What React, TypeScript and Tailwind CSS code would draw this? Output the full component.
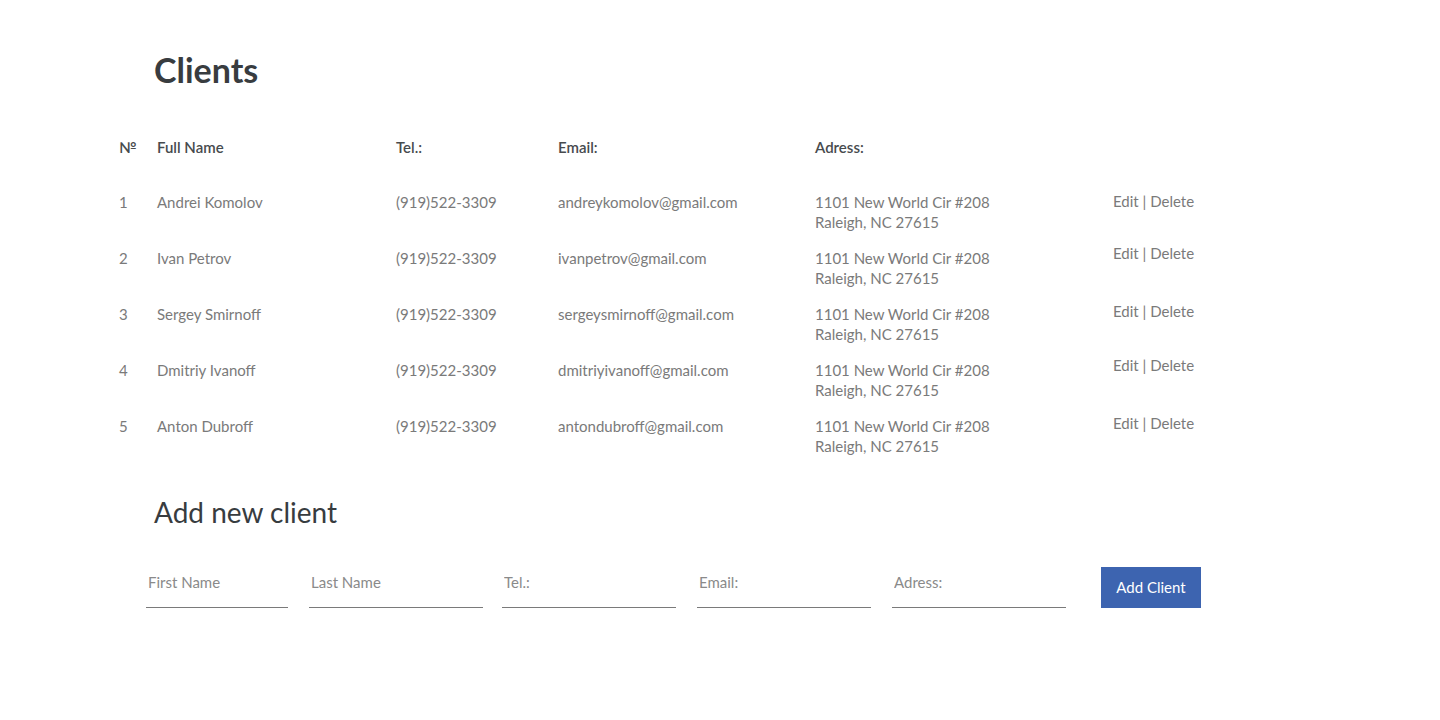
import React from 'react'

const clients = [
  { id: 1, name: 'Andrei Komolov', tel: '(919)522-3309', email: 'andreykomolov@gmail.com', shift: 'mt-[-1px]' },
  { id: 2, name: 'Ivan Petrov', tel: '(919)522-3309', email: 'ivanpetrov@gmail.com', shift: 'mt-[-5px]' },
  { id: 3, name: 'Sergey Smirnoff', tel: '(919)522-3309', email: 'sergeysmirnoff@gmail.com', shift: 'mt-[-3px]' },
  { id: 4, name: 'Dmitriy Ivanoff', tel: '(919)522-3309', email: 'dmitriyivanoff@gmail.com', shift: 'mt-[-5px]' },
  { id: 5, name: 'Anton Dubroff', tel: '(919)522-3309', email: 'antondubroff@gmail.com', shift: 'mt-[-3px]' },
]

const fields = [
  { label: 'First Name', cls: 'w-[142px]' },
  { label: 'Last Name', cls: 'w-[174px] ml-[21px]' },
  { label: 'Tel.:', cls: 'w-[174px] ml-[19px]' },
  { label: 'Email:', cls: 'w-[174px] ml-[21px]' },
  { label: 'Adress:', cls: 'w-[174px] ml-[21px]' },
]

const cols = 'grid grid-cols-[38px_239px_162px_257px_298px_130px]'

export default function App() {
  return (
    <main className="min-h-screen bg-white font-['Lato','Noto_Sans',sans-serif] text-[#7a7a7a]">
      <div className="pl-[154px] pt-[50px]">
        <h1 className="text-[34px] font-bold leading-[40px] text-[#383c3f]">Clients</h1>
      </div>

      {/* таблица клиентов */}
      <div className="pl-[119px] pt-[47px]">
        <div className={`${cols} text-[15px] font-semibold leading-[20px] text-[#474b4e]`}>
          <div>№</div>
          <div>Full Name</div>
          <div>Tel.:</div>
          <div>Email:</div>
          <div>Adress:</div>
          <div></div>
        </div>

        <div className="pt-[35px]">
          {clients.map(c => (
            <div key={c.id} className={`${cols} h-[56px] text-[15px] leading-[20px]`}>
              <div>{c.id}</div>
              <div>{c.name}</div>
              <div>{c.tel}</div>
              <div>{c.email}</div>
              <div>
                <div>1101 New World Cir #208</div>
                <div>Raleigh, NC 27615</div>
              </div>
              <div className={c.shift}>
                <span className="cursor-pointer">Edit</span> | <span className="cursor-pointer">Delete</span>
              </div>
            </div>
          ))}
        </div>
      </div>

      {/* добавление клиента */}
      <div className="pl-[154px] pt-[24px]">
        <h2 className="text-[28px] leading-[32px] text-[#383c3f]">Add new client</h2>
      </div>

      <div className="flex items-end pl-[146px] pt-[39px]">
        <div className="flex">
          {fields.map(f => (
            <input
              key={f.label}
              placeholder={f.label}
              className={`${f.cls} h-[41px] border-b border-[#7a7a7a] bg-transparent px-[2px] pb-[10px] text-[15px] text-[#555] outline-none placeholder:text-[#8a8a8a]`}
            />
          ))}
        </div>
        <button className="ml-[35px] h-[41px] w-[100px] bg-[#3d64b0] text-[15px] text-white">
          Add Client
        </button>
      </div>
    </main>
  )
}
